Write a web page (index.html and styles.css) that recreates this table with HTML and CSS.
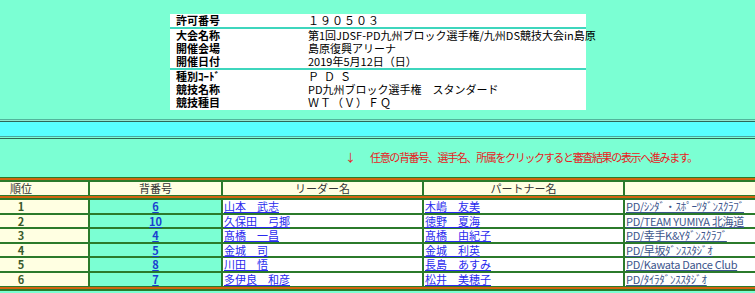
FILE: index.html
```html
<!DOCTYPE html>
<html lang="ja">
<head>
<meta charset="utf-8">
<title>審査結果</title>
<link rel="stylesheet" href="styles.css">
</head>
<body>
<div class="info">
  <div class="irow"><span class="lbl">許可番号</span><span class="val spaced">１９０５０３</span></div>
  <div class="sep"></div>
  <div class="irow"><span class="lbl">大会名称</span><span class="val">第1回JDSF-PD九州ブロック選手権/九州DS競技大会in島原</span></div>
  <div class="irow"><span class="lbl">開催会場</span><span class="val">島原復興アリーナ</span></div>
  <div class="irow"><span class="lbl">開催日付</span><span class="val">2019年5月12日（日）</span></div>
  <div class="sep"></div>
  <div class="irow"><span class="lbl">種別ｺｰﾄﾞ</span><span class="val spaced2">ＰＤＳ</span></div>
  <div class="irow"><span class="lbl">競技名称</span><span class="val">PD九州ブロック選手権　スタンダード</span></div>
  <div class="irow"><span class="lbl">競技種目</span><span class="val spaced">ＷＴ（Ｖ）ＦＱ</span></div>
</div>

<div class="band"></div>

<p class="notice"><span class="arrow">↓</span>任意の背番号、選手名、所属をクリックすると審査結果の表示へ進みます。</p>

<div class="results">
  <div class="rule"></div>
  <div class="hd first">順位</div>
  <div class="hd">背番号</div>
  <div class="hd">リーダー名</div>
  <div class="hd">パートナー名</div>
  <div class="hd"></div>
  <div class="rule"></div>

  <div class="c rank">1</div><div class="c num"><a href="#">6</a></div><div class="c name"><a href="#">山本　武志</a></div><div class="c name"><a href="#">木嶋　友美</a></div><div class="c club"><a href="#">PD/ｼﾝﾀﾞ・ｽﾎﾟｰﾂﾀﾞﾝｽｸﾗﾌﾞ</a></div>
  <div class="c rank">2</div><div class="c num"><a href="#">10</a></div><div class="c name"><a href="#">久保田　弓揶</a></div><div class="c name"><a href="#">徳野　夏海</a></div><div class="c club"><a href="#">PD/TEAM YUMIYA 北海道</a></div>
  <div class="c rank">3</div><div class="c num"><a href="#">4</a></div><div class="c name"><a href="#">髙橋　一昌</a></div><div class="c name"><a href="#">髙橋　由紀子</a></div><div class="c club"><a href="#">PD/幸手K&amp;Yﾀﾞﾝｽｸﾗﾌﾞ</a></div>
  <div class="c rank">4</div><div class="c num"><a href="#">5</a></div><div class="c name"><a href="#">金城　司</a></div><div class="c name"><a href="#">金城　利英</a></div><div class="c club"><a href="#">PD/早坂ﾀﾞﾝｽｽﾀｼﾞｵ</a></div>
  <div class="c rank">5</div><div class="c num"><a href="#">8</a></div><div class="c name"><a href="#">川田　悟</a></div><div class="c name"><a href="#">長島　あすみ</a></div><div class="c club"><a href="#">PD/Kawata Dance Club</a></div>
  <div class="c rank last">6</div><div class="c num last"><a href="#">7</a></div><div class="c name last"><a href="#">多伊良　和彦</a></div><div class="c name last"><a href="#">松井　美穂子</a></div><div class="c club last"><a href="#">PD/ﾀｲﾗﾀﾞﾝｽｽﾀｼﾞｵ</a></div>
  <div class="rule"></div>
</div>
</body>
</html>
```
FILE: styles.css
```css
html, body {
  margin: 0;
  padding: 0;
}
body {
  background: #7bffd3;
  font-family: "Noto Sans CJK JP", "Noto Sans", sans-serif;
  font-size: 11px;
  color: #000;
  overflow: hidden;
  width: 755px;
  height: 293px;
}

.info {
  width: 416px;
  margin: 14px 0 0 170px;
  background: #fff;
  padding-bottom: 1px;
}
.irow {
  display: flex;
  height: 13px;
  line-height: 13px;
}
.lbl {
  width: 132px;
  padding-left: 6px;
  font-weight: bold;
  flex: none;
}
.val {
  white-space: nowrap;
}
.spaced { letter-spacing: 1px; }
.spaced2 { letter-spacing: 5px; }
.sep {
  height: 2px;
  background: #3ed6bd;
}

.band {
  margin-top: 9px;
  height: 20px;
  background: linear-gradient(to bottom,
    #52b59b 0 1px,
    #8fe6cf 1px 2px,
    #2e6658 2px 3px,
    #58ffff 3px 17px,
    #4aa6a0 17px 18px,
    #7bffd3 18px 19px,
    #2e6658 19px 20px);
}

.notice {
  margin: 12px 0 0 0;
  height: 13px;
  line-height: 13px;
  color: #e8201c;
  text-align: right;
  padding-right: 58px;
  letter-spacing: -1.35px;
  white-space: nowrap;
}
.arrow {
  margin-right: 14px;
  letter-spacing: 0;
}

.results {
  margin-top: 13px;
  width: 755px;
  display: grid;
  grid-template-columns: 88px 131px 199px 199px 130px;
  column-gap: 2px;
  background: #2b7a2b;
}
.rule {
  grid-column: 1 / -1;
  height: 5px;
  background: linear-gradient(to bottom, #2b7a2b 0 1px, #d2640f 1px 3px, #2b7a2b 3px 5px);
}
.hd {
  background: #ffffe2;
  height: 13px;
  line-height: 13px;
  text-align: center;
  color: #333;
}
.hd.first {
  padding-right: 46px;
}
.c {
  height: 12.5px;
  line-height: 12.5px;
  border-bottom: 2px solid #2b7a2b;
  white-space: nowrap;
}
.c.last { border-bottom: 0; height: 13px; }
.rank {
  background: #ffffe2;
  text-align: center;
  padding-right: 46px;
  font-weight: bold;
  color: #3a5a2a;
}
.num {
  background: #7bffd3;
  text-align: center;
  font-weight: bold;
}
.num a { color: #1a3fd0; }
.name {
  background: #fff;
  padding-left: 1px;
}
.name a { color: #2a2aee; }
.club {
  background: #fff;
  padding-left: 1px;
  letter-spacing: -0.3px;
}
.club a { color: #3c558c; }
a { text-decoration: underline; }
```
